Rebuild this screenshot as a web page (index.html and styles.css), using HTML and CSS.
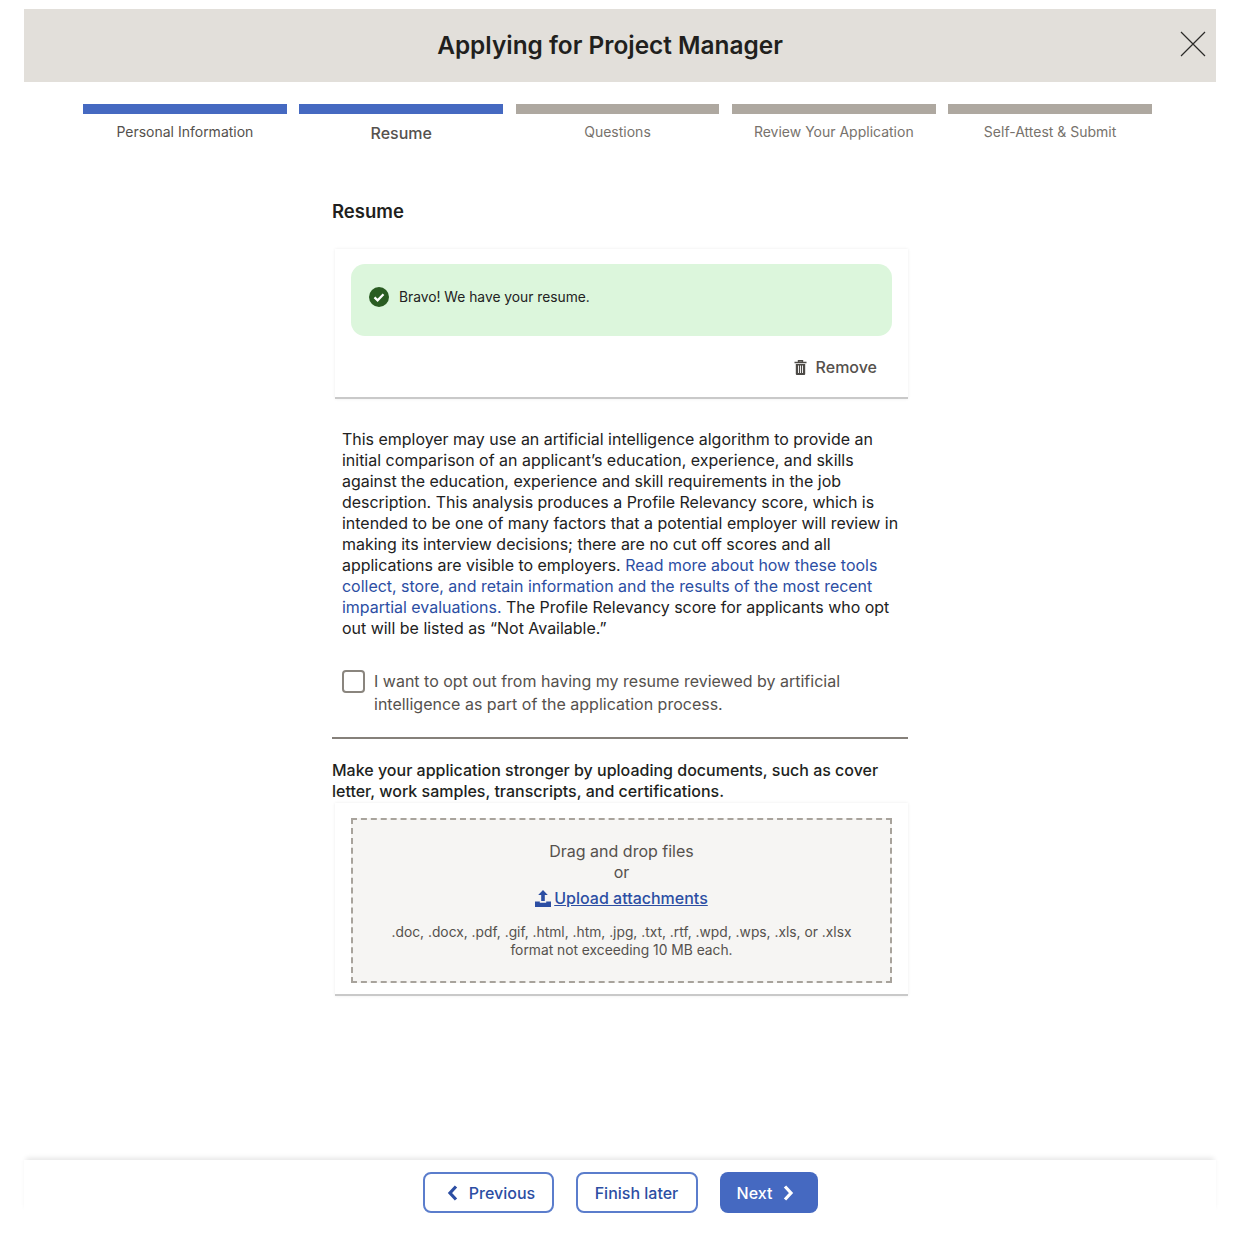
FILE: index.html
```html
<!DOCTYPE html>
<html lang="en">
<head>
  <meta charset="UTF-8" />
  <title>Applying for Project Manager</title>
  <link rel="stylesheet" href="styles.css">
</head>
<body>
  <div class="modal">
    <div class="modal-header">
      <h1>Applying for Project Manager</h1>
      <svg class="close-icon" width="26" height="26" viewBox="0 0 26 26"><path d="M1 1 25 25M25 1 1 25" fill="none" stroke="#2b2a28" stroke-width="1.200"/></svg>
    </div>

    <div class="steps">
      <div class="step done"><div class="step-bar"></div><span>Personal Information</span></div>
      <div class="step done current"><div class="step-bar"></div><span>Resume</span></div>
      <div class="step"><div class="step-bar"></div><span>Questions</span></div>
      <div class="step"><div class="step-bar"></div><span>Review Your Application</span></div>
      <div class="step"><div class="step-bar"></div><span>Self-Attest &amp; Submit</span></div>
    </div>

    <div class="content">
      <h2>Resume</h2>

      <div class="card resume-card">
        <div class="alert">
          <svg width="20" height="20" viewBox="0 0 20 20"><circle cx="10" cy="10" r="10" fill="#2a5c22"/><path d="M5.500 10.300 8.600 13.300 14.500 7.200" fill="none" stroke="#fff" stroke-width="2.300"/></svg>
          <span>Bravo! We have your resume.</span>
        </div>
        <div class="remove-row">
          <svg width="13" height="15" viewBox="0 0 13 15"><path d="M4.500 2V.8h4V2M.5 2.500h12" fill="none" stroke="#4d4a46" stroke-width="1.400"/><path d="M1.800 4h9.400v10a1 1 0 0 1-1 1H2.800a1 1 0 0 1-1-1z" fill="#4d4a46"/><path d="M4.500 5.500v7.500M6.500 5.500v7.500M8.500 5.500v7.500" stroke="#fff" stroke-width=".9"/></svg>
          <span>Remove</span>
        </div>
      </div>

      <p class="ai-notice">This employer may use an artificial intelligence algorithm to provide an initial comparison of an applicant’s education, experience, and skills against the education, experience and skill requirements in the job description. This analysis produces a Profile Relevancy score, which is intended to be one of many factors that a potential employer will review in making its interview decisions; there are no cut off scores and all applications are visible to employers. <a href="#">Read more about how these tools collect, store, and retain information and the results of the most recent impartial evaluations.</a> The Profile Relevancy score for applicants who opt out will be listed as “Not Available.”</p>

      <label class="opt-out">
        <span class="checkbox"></span>
        <span>I want to opt out from having my resume reviewed by artificial intelligence as part of the application process.</span>
      </label>

      <hr class="divider">

      <p class="docs-intro">Make your application stronger by uploading documents, such as cover letter, work samples, transcripts, and certifications.</p>

      <div class="card upload-card">
        <div class="dropzone">
          <div class="drop-text">Drag and drop files<br>or</div>
          <a class="upload-link" href="#">
            <svg width="16" height="17" viewBox="0 0 16 17"><path d="M8 0 12.800 5H9.800v6H6.200V5H3.200z" fill="#2c4ea3"/><path d="M0 11.500h4.800v1.300h6.400v-1.300H16V17H0z" fill="#2c4ea3"/></svg>
            <span>Upload attachments</span>
          </a>
          <div class="formats">.doc, .docx, .pdf, .gif, .html, .htm, .jpg, .txt, .rtf, .wpd, .wps, .xls, or .xlsx<br>format not exceeding 10 MB each.</div>
        </div>
      </div>
    </div>

    <div class="modal-footer">
      <button class="btn btn-outline btn-previous">
        <svg width="11" height="16" viewBox="0 0 11 16"><path d="M9 1.500 3 8l6 6.500" fill="none" stroke="#2c4ea3" stroke-width="3.200"/></svg>
        Previous
      </button>
      <button class="btn btn-outline btn-later">Finish later</button>
      <button class="btn btn-primary">
        Next
        <svg width="11" height="16" viewBox="0 0 11 16"><path d="M2 1.500 8 8l-6 6.500" fill="none" stroke="#fff" stroke-width="3.200"/></svg>
      </button>
    </div>
  </div>
</body>
</html>
```

FILE: styles.css
```css
* {
  box-sizing: border-box;
}

body {
  margin: 0;
  background: #fff;
  font-family: "Inter", "Liberation Sans", sans-serif;
  color: #222;
}

.modal {
  width: 1192px;
  height: 1237px;
  margin: 0 24px;
  padding-top: 9px;
  display: flex;
  flex-direction: column;
}

.modal-header {
  height: 73px;
  padding: 0 20px 2px 0;
  background: #e2dfda;
  display: flex;
  align-items: center;
  justify-content: center;
  position: relative;
}

.modal-header h1 {
  margin: 0;
  font-size: 24.400px;
  font-weight: 600;
  color: #211f1d;
}

.close-icon {
  position: absolute;
  right: 10px;
  top: 22px;
}

.steps {
  display: flex;
  gap: 12.500px;
  margin: 22px 64px 0 59px;
}

.step {
  flex: 1;
  text-align: center;
  font-size: 14px;
  color: #77726c;
}

.step-bar {
  height: 10px;
  margin-bottom: 9px;
  background: #aea8a0;
}

.step.done .step-bar {
  background: #4569c1;
}

.step.done {
  color: #55514d;
}

.step.current {
  font-size: 16px;
  font-weight: 500;
}

.content {
  width: 576px;
  margin: 0 0 0 308px;
  flex: 1;
}

.content h2 {
  margin: 56px 0 26px;
  font-size: 18.500px;
  line-height: 24px;
  font-weight: 600;
  color: #211f1d;
}

.card {
  margin-left: 3px;
  border-bottom: 2px solid #c9c9c9;
  box-shadow: 0 0 3px rgba(0, 0, 0, 0.08);
  padding: 15px 16px 0;
}

.resume-card {
  height: 150px;
}

.alert {
  height: 72px;
  background: #dcf6dc;
  border-radius: 14px;
  padding: 23px 18px;
  display: flex;
  align-items: flex-start;
  gap: 10px;
  font-size: 13.800px;
  line-height: 20px;
}

.remove-row {
  display: flex;
  justify-content: flex-end;
  align-items: center;
  gap: 9px;
  margin-top: 21px;
  padding-right: 15px;
  font-size: 16px;
  line-height: 20px;
  font-weight: 500;
  color: #55514d;
}

.ai-notice {
  margin: 30px 8px 0 10px;
  font-size: 15.960px;
  line-height: 21px;
}

.ai-notice a {
  color: #2c4ea3;
  text-decoration: none;
}

.opt-out {
  display: flex;
  gap: 9px;
  margin: 31px 60px 0 10px;
  font-size: 16px;
  line-height: 23px;
  color: #55514d;
}

.checkbox {
  flex: none;
  width: 23px;
  height: 23px;
  border: 2px solid #8a857e;
  border-radius: 4px;
}

.divider {
  height: 2px;
  margin: 21px 0 0;
  border: 0;
  background: #85807a;
}

.docs-intro {
  margin: 21px 0 0;
  font-size: 16px;
  line-height: 21px;
  font-weight: 500;
  color: #211f1d;
}

.upload-card {
  height: 193px;
  margin-top: 1px;
}

.dropzone {
  height: 165px;
  border: 2px dashed #a8a39c;
  background: #f6f5f3;
  text-align: center;
  padding-top: 21px;
}

.drop-text {
  font-size: 16px;
  line-height: 21px;
  color: #55514d;
}

.upload-link {
  display: inline-flex;
  align-items: center;
  gap: 3px;
  margin-top: 5px;
  font-size: 16px;
  line-height: 21px;
  font-weight: 500;
  color: #2c4ea3;
}

.formats {
  margin-top: 12px;
  font-size: 13.800px;
  line-height: 18px;
  color: #55514d;
}

.modal-footer {
  height: 54px;
  margin-bottom: 23px;
  padding-top: 12px;
  display: flex;
  justify-content: center;
  gap: 22px;
  box-shadow: 0 -4px 5px -2px rgba(0, 0, 0, 0.1);
}

.btn {
  height: 41px;
  padding: 0;
  border-radius: 8px;
  font-family: inherit;
  font-size: 16px;
  font-weight: 500;
  display: flex;
  align-items: center;
  justify-content: center;
  gap: 11px;
}

.btn-outline {
  background: #fff;
  border: 2px solid #5b7dcc;
  color: #2c4ea3;
}

.btn-previous {
  width: 131px;
  padding-left: 6px;
}

.btn-later {
  width: 122px;
}

.btn-primary {
  width: 98px;
  padding-right: 6px;
  background: #4569c1;
  border: 0;
  color: #fff;
}
```
